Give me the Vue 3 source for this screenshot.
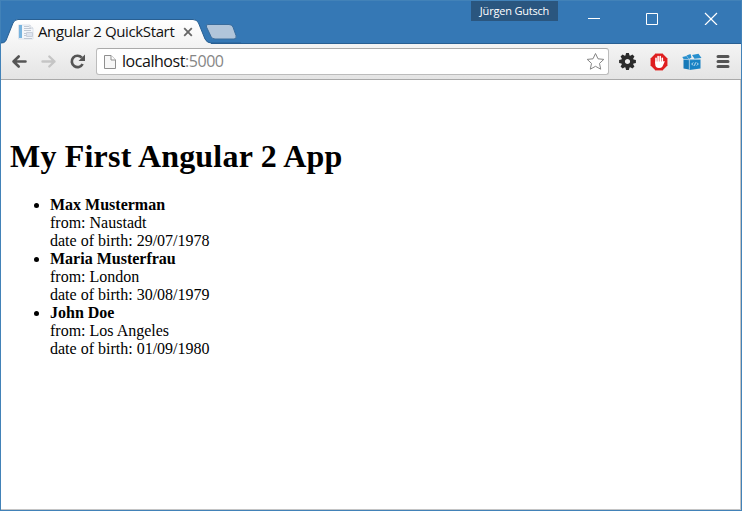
<script setup>
const people = [
  { name: 'Max Musterman', city: 'Naustadt', born: '29/07/1978' },
  { name: 'Maria Musterfrau', city: 'London', born: '30/08/1979' },
  { name: 'John Doe', city: 'Los Angeles', born: '01/09/1980' },
]
const teeth = [0, 45, 90, 135, 180, 225, 270, 315]
</script>

<template>
  <div class="window">
    <header class="titlebar">
      <div class="tabs">
        <div class="tab">
          <svg class="tab-shape" width="240" height="25" viewBox="0 0 240 25">
            <defs>
              <linearGradient id="tabFill" x1="0" y1="0" x2="0" y2="1">
                <stop offset="0" stop-color="#ffffff" />
                <stop offset="1" stop-color="#f4f4f4" />
              </linearGradient>
            </defs>
            <path d="M0 25V24C4 24 5 22 6 19L12 4Q13.500 .5 17 .5H192Q196 .5 197.500 4L204 20Q206 24 210 24V25Z" fill="url(#tabFill)" />
            <path d="M0 24C4 24 5 22 6 19L12 4Q13.500 .5 17 .5H192Q196 .5 197.500 4L204 20Q206 24 210 24H240" fill="none" stroke="#285f92" stroke-width="1" />
            <path d="M207 5.500H228Q231 5.500 232 8L235 16.500Q236 20 233 20H214Q211 20 210 17.500L205.500 8Q204.500 5.500 207 5.500Z" fill="#b1c5da" stroke="#3a6c9c" />
          </svg>
          <svg class="favicon" width="16" height="16" viewBox="0 0 16 16">
            <path d="M.5 1H12L15 4V15H.5Z" fill="#f3f6fa" stroke="#dce3ec" />
            <path d="M1 1H4V14H1Z" fill="#78b4df" />
            <path d="M6 2.500H11M6 4.500H13M6 6.500H13M6 9.500H8M6 11.500H8M6 14.500H14" stroke="#c0c8d3" />
            <path d="M8.500 8.500H14.500V12.500H8.500Z" fill="#dce3ee" stroke="#c8cfdb" />
            <path d="M12 1V4H15" fill="#fff" stroke="#c7ced8" />
          </svg>
          <span class="tab-title">Angular 2 QuickStart</span>
          <svg class="tab-close" width="10" height="10" viewBox="0 0 10 10"><path d="M1.200 1.200L8.800 8.800M8.800 1.200L1.200 8.800" stroke="#666" stroke-width="1.800" /></svg>
        </div>
      </div>
      <div class="user">Jürgen Gutsch</div>
      <svg class="controls" width="132" height="14" viewBox="0 0 132 14">
        <path d="M0 7.500H12" stroke="#fff" />
        <path d="M58.500 2.500H69.500V13.500H58.500Z" fill="none" stroke="#fff" />
        <path d="M117 2L129 14M129 2L117 14" stroke="#fff" stroke-width="1.200" />
      </svg>
    </header>

    <nav class="toolbar">
      <svg class="nav-icons" width="76" height="18" viewBox="0 0 76 18">
        <path d="M15.500 8.500H3.500M8.700 3.500L3.500 8.500L8.700 13.500" fill="none" stroke="#555" stroke-width="2.600" stroke-linecap="round" stroke-linejoin="round" />
        <path d="M32.500 8.500H44.500M39.300 3.500L44.500 8.500L39.300 13.500" fill="none" stroke="#c5c5c5" stroke-width="2.400" stroke-linecap="round" stroke-linejoin="round" />
        <path d="M71.800 4.700A5.700 5.700 0 1 0 72.600 11" fill="none" stroke="#555" stroke-width="2.700" />
        <path d="M75 1.500V8H68.500Z" fill="#555" />
      </svg>
      <div class="address">
        <svg width="12" height="16" viewBox="0 0 12 16">
          <path d="M.5 1.500H7L11.500 6V14.500H.5Z" fill="#f7f7f7" stroke="#8f8f8f" />
          <path d="M7 1.500V6H11.500" fill="#fff" stroke="#8f8f8f" />
        </svg>
        <span class="url">localhost<span class="port">:5000</span></span>
        <svg class="star" width="20" height="19" viewBox="0 0 20 19">
          <path d="M9.500 1.500L12 6.800L17.800 7.400L13.500 11.400L14.700 17.200L9.500 14.300L4.300 17.200L5.500 11.400L1.200 7.400L7 6.800Z" fill="#fff" stroke="#858585" stroke-linejoin="round" />
        </svg>
      </div>
      <div class="extensions">
        <svg width="18" height="18" viewBox="-9.500 -8.500 18 18">
          <path v-for="a in teeth" :key="a" d="M-2.300 -5L-1.400 -8.400H1.400L2.300 -5Z" :transform="`rotate(${a})`" fill="#2b2b2b" />
          <circle r="4.400" fill="none" stroke="#2b2b2b" stroke-width="3.600" />
        </svg>
        <svg width="18" height="18" viewBox="0 0 18 18">
          <path d="M5.500 .5H12.500L17.500 5.500V12.500L12.500 17.500H5.500L.5 12.500V5.500Z" fill="#df1e20" stroke="#e79391" />
          <path d="M6 10V5.300M8.100 9V3.500M10.200 9V3.500M12.300 10V5.300" stroke="#fff" stroke-width="1.600" stroke-linecap="round" />
          <path d="M5.200 8.500H13.100L14 8Q15 8 14.500 9L12.500 13.500Q11.500 15 9 15Q5.200 15 5.200 11Z" fill="#fff" />
        </svg>
        <svg width="20" height="18" viewBox="0 0 20 18">
          <path d="M1.500 6.500H7V16.500L1.500 15.500Z" fill="#1679b8" />
          <path d="M7.500 6.500H18.500V15.500L7.500 17Z" fill="#1982c4" />
          <path d="M.3 4L4.500 3L6.500 6H1.500ZM4.500 2.500L8.500 1L9.500 4.500L7 6ZM10 2L16.500 .8L19.500 5L12.500 5.800Z" fill="#278fce" />
          <path d="M7.200 7V16.500M1.500 6.300L7.500 6.800L18.500 6.300" fill="none" stroke="#a0cce7" stroke-width=".5" />
          <path d="M11.200 9.500L9.700 11L11.200 12.500M14.800 9.500L16.300 11L14.800 12.500M13.500 9.500L12.500 12.700" fill="none" stroke="#d7ebf7" stroke-width=".9" />
        </svg>
        <svg width="14" height="14" viewBox="0 0 14 14"><path d="M2 1.500H12M2 6.500H12M2 11.500H12" stroke="#555" stroke-width="3" stroke-linecap="round" /></svg>
      </div>
    </nav>

    <main class="page">
      <h1>My First Angular 2 App</h1>
      <ul>
        <li v-for="p in people" :key="p.name">
          <strong>{{ p.name }}</strong><br>
          from: {{ p.city }}<br>
          date of birth: {{ p.born }}
        </li>
      </ul>
    </main>
  </div>
</template>

<style>
body { margin: 0; overflow: hidden; }
</style>

<style scoped>
.window {
  box-sizing: border-box;
  width: 742px;
  height: 511px;
  display: flex;
  flex-direction: column;
  border: 1px solid #4282b8;
  background: #fff;
}
svg { display: block; flex: none; }
.titlebar {
  height: 43px;
  flex: none;
  display: flex;
  align-items: flex-start;
  background: #3578b5;
  box-shadow: inset 0 -1px #285f92;
}
.tabs { width: 470px; padding-top: 18px; }
.tab {
  position: relative;
  display: flex;
  align-items: center;
  box-sizing: border-box;
  height: 25px;
  padding-left: 17px;
}
.tab-shape { position: absolute; left: 0; top: 0; }
.favicon, .tab-title, .tab-close { position: relative; }
.tab-title {
  width: 138px;
  margin-left: 4px;
  padding-bottom: 2px;
  font: 15px/20px "Open Sans", sans-serif;
  letter-spacing: -0.37px;
  white-space: nowrap;
  color: #111;
}
.tab-close { margin-left: 7px; }
.user {
  width: 87px;
  height: 20px;
  text-align: center;
  background: #2a567f;
  color: #fff;
  font: 11px/20px "Open Sans", sans-serif;
  letter-spacing: -0.2px;
  white-space: nowrap;
}
.controls { margin: 10px 0 0 30px; }
.toolbar {
  height: 36px;
  flex: none;
  box-sizing: border-box;
  display: flex;
  align-items: center;
  padding-left: 9px;
  background: linear-gradient(#f4f4f4, #e4e4e4);
  border-bottom: 1px solid #a9a9a9;
}
.address {
  box-sizing: border-box;
  width: 513px;
  height: 27px;
  margin-left: 10px;
  padding: 0 2px 0 7px;
  display: flex;
  align-items: center;
  border: 1px solid #bcbcbc;
  border-top-color: #aaa;
  border-radius: 3px;
  background: #fff;
}
.url {
  margin-left: 6px;
  padding-bottom: 2px;
  font: 16px/22px "Open Sans", sans-serif;
  letter-spacing: -0.45px;
  color: #111;
}
.port { color: #868686; }
.star { margin-left: auto; }
.extensions {
  display: flex;
  align-items: center;
  gap: 14px;
  margin-left: 9px;
}
.page {
  flex: 1;
  padding: 58px 9px 0;
  border-right: 1px solid #c4c4c4;
  border-bottom: 1px solid #c4c4c4;
  font: 16px/18px "Liberation Serif", serif;
  color: #000;
}
h1 {
  margin: 0 0 22px;
  font-size: 32px;
  line-height: 36px;
  letter-spacing: 0.19px;
}
ul { margin: 0; padding-left: 40px; }
</style>
